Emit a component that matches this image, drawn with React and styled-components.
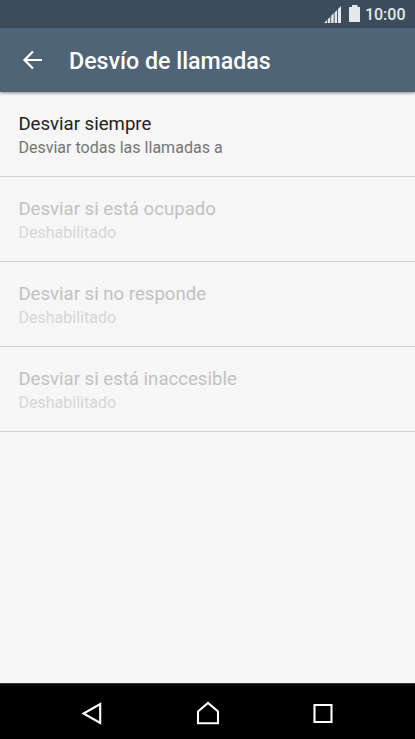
import React from 'react';
import styled, { createGlobalStyle } from 'styled-components';

const GlobalStyle = createGlobalStyle`
  * { box-sizing: border-box; }
  html, body { margin: 0; padding: 0; }
  body { font-family: Roboto, sans-serif; background: #f6f6f6; overflow: hidden; }
`;

const Screen = styled.div`
  display: flex;
  flex-direction: column;
  width: 100%;
  height: 100vh;
  background: #f6f6f6;
`;

const StatusBar = styled.div`
  flex: none;
  display: flex;
  align-items: center;
  justify-content: flex-end;
  height: 28px;
  padding-right: 9.5px;
  background: #3d4c5b;
`;

const StatusIcon = styled.svg`
  display: block;
  margin-right: ${({ $gap }) => $gap}px;
`;

const Clock = styled.span`
  font-size: 16px;
  font-weight: 500;
  line-height: 28px;
  padding-top: 1px;
  color: #e4e8ea;
`;

const AppBar = styled.header`
  flex: none;
  display: flex;
  align-items: center;
  height: 64px;
  padding-left: 22px;
  background: #506477;
  box-shadow: 0 1px 3px rgba(0, 0, 0, 0.45);
  z-index: 1;
`;

const BackButton = styled.button`
  display: flex;
  width: 47px;
  padding: 0;
  border: 0;
  background: none;
`;

const Title = styled.h1`
  margin: 0;
  padding-top: 2px;
  font-size: 23.2px;
  font-weight: 500;
  line-height: 30px;
  color: #fff;
`;

const List = styled.ul`
  flex: 1;
  margin: 0;
  padding: 0;
  list-style: none;
`;

const Row = styled.li`
  height: 85px;
  padding: 20px 18.4px 0;
  border-bottom: 1px solid #d3d3d3;
`;

const RowTitle = styled.div`
  font-size: 18.6px;
  line-height: 25px;
  color: ${({ $disabled }) => ($disabled ? '#c2c2c2' : '#222')};
`;

const RowSummary = styled.div`
  font-size: 16.05px;
  line-height: 22px;
  color: ${({ $disabled }) => ($disabled ? '#d6d6d6' : '#757575')};
`;

const NavBar = styled.nav`
  flex: none;
  display: flex;
  justify-content: center;
  align-items: center;
  height: 56px;
  border-top: 1px solid #383838;
  background: #000;
`;

const NavButton = styled.button`
  display: flex;
  justify-content: center;
  width: 115.5px;
  padding: 3px 0 0;
  border: 0;
  background: none;
`;

const NavIcon = styled.svg`
  display: block;
  fill: none;
  stroke: #fff;
  stroke-width: 2.1;
`;

const options = [
  { title: 'Desviar siempre', summary: 'Desviar todas las llamadas a' },
  { title: 'Desviar si está ocupado', summary: 'Deshabilitado', disabled: true },
  { title: 'Desviar si no responde', summary: 'Deshabilitado', disabled: true },
  { title: 'Desviar si está inaccesible', summary: 'Deshabilitado', disabled: true },
];

export default function App() {
  return (
    <Screen>
      <GlobalStyle />
      <StatusBar>
        <StatusIcon $gap={7.5} width="17" height="18" viewBox="0 0 17 18" fill="#e4e8ea">
          <path d="M0 18l3-3v3zM3.800 18v-3.800L6.300 11.700V18zM7.200 18V10.800L9.700 8.300V18zM10.600 18V7.400L13.100 4.900V18zM14 18V4L17 1v17z" />
        </StatusIcon>
        <StatusIcon $gap={4.5} width="11.5" height="18" viewBox="0 0 11.5 18" fill="#e4e8ea">
          <path d="M3 0h5.500v2h3v15H0V2h3z" />
        </StatusIcon>
        <Clock>10:00</Clock>
      </StatusBar>
      <AppBar>
        <BackButton aria-label="Atrás">
          <svg width="21" height="20" viewBox="0 0 21 20" fill="none" stroke="#fff" strokeWidth="2.2">
            <path d="M20 10H3M11 1.500L2.500 10L11 18.500" />
          </svg>
        </BackButton>
        <Title>Desvío de llamadas</Title>
      </AppBar>
      <List>
        {options.map(({ title, summary, disabled }) => (
          <Row key={title}>
            <RowTitle $disabled={disabled}>{title}</RowTitle>
            <RowSummary $disabled={disabled}>{summary}</RowSummary>
          </Row>
        ))}
      </List>
      <NavBar>
        <NavButton aria-label="Volver">
          <NavIcon width="24" height="24" viewBox="0 0 24 24">
            <path d="M20.200 3v19L3.500 12.500z" />
          </NavIcon>
        </NavButton>
        <NavButton aria-label="Inicio">
          <NavIcon width="24" height="24" viewBox="0 0 24 24">
            <path d="M2 10.500L12 2l10 8.500V22.200H2z" />
          </NavIcon>
        </NavButton>
        <NavButton aria-label="Recientes">
          <NavIcon width="24" height="24" viewBox="0 0 24 24">
            <path d="M3.500 4h17v17h-17z" />
          </NavIcon>
        </NavButton>
      </NavBar>
    </Screen>
  );
}
